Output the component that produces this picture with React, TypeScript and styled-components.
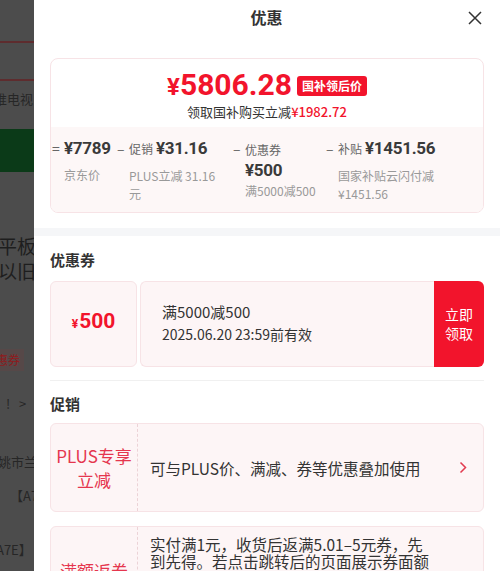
import React from 'react';
import styled, { createGlobalStyle } from 'styled-components';

const RED = '#f2142c';
const PINK_BG = '#fdf5f6';
const PINK_LINE = '#f7e3e6';

const GlobalStyle = createGlobalStyle`
  html, body {
    margin: 0;
    padding: 0;
    background: #ffffff;
  }
  body {
    font-family: "Noto Sans CJK SC", "Noto Sans", sans-serif;
    color: #333;
    overflow: hidden;
  }
  * {
    box-sizing: border-box;
  }
`;

function CloseIcon() {
  return (
    <svg width="16" height="16" viewBox="0 0 16 16">
      <path d="M2 2 L14 14 M14 2 L2 14" stroke="#333" strokeWidth="1.5" fill="none" />
    </svg>
  );
}

function Chevron() {
  return (
    <svg width="8" height="13" viewBox="0 0 8 13">
      <polyline points="1.5,1.5 6.5,6.5 1.5,11.5" stroke="#e23a4f" strokeWidth="1.5" fill="none" />
    </svg>
  );
}

function App() {
  return (
    <Page>
      <GlobalStyle />
      <Backdrop>
        <BgRule $top={41} />
        <BgRule $top={36} />
        <BgText $top={9} $left={-6}>
          推电视
        </BgText>
        <BgBanner />
        <BgTitle $top={62}>平板洞</BgTitle>
        <BgTitle $top={1}>以旧换</BgTitle>
        <BgTag>惠券</BgTag>
        <BgText $top={24} $left={6}>
          !&nbsp;&nbsp;&nbsp;&gt;
        </BgText>
        <BgText $top={40} $left={-2}>
          姚市兰
        </BgText>
        <BgText $top={16} $left={10}>
          【A7
        </BgText>
        <BgText $top={36} $left={-4}>
          A7E】
        </BgText>
      </Backdrop>

      <Sheet>
        <Header>
          <span />
          <Title>优惠</Title>
          <CloseButton>
            <CloseIcon />
          </CloseButton>
        </Header>

        <TopSection>
          <PriceCard>
            <PriceTop>
              <PriceLine>
                <BigPrice>
                  <small>¥</small>5806.28
                </BigPrice>
                <PriceTag>国补领后价</PriceTag>
              </PriceLine>
              <PriceNote>
                领取国补购买立减<em>¥1982.72</em>
              </PriceNote>
            </PriceTop>
            <Breakdown>
              <BreakItem>
                <Sign>=</Sign>
                <div>
                  <MainLine>
                    <Amount>¥7789</Amount>
                  </MainLine>
                  <SubText>京东价</SubText>
                </div>
              </BreakItem>
              <BreakItem>
                <Sign>–</Sign>
                <div>
                  <MainLine>
                    <Label>促销</Label>
                    <Amount>¥31.16</Amount>
                  </MainLine>
                  <SubText $width={92}>PLUS立减 31.16 元</SubText>
                </div>
              </BreakItem>
              <BreakItem>
                <Sign>–</Sign>
                <div>
                  <MainLine $stacked>
                    <Label>优惠券</Label>
                    <Amount>¥500</Amount>
                  </MainLine>
                  <SubText $tight>满5000减500</SubText>
                </div>
              </BreakItem>
              <BreakItem>
                <Sign>–</Sign>
                <div>
                  <MainLine>
                    <Label>补贴</Label>
                    <Amount>¥1451.56</Amount>
                  </MainLine>
                  <SubText $width={100}>国家补贴云闪付减 ¥1451.56</SubText>
                </div>
              </BreakItem>
            </Breakdown>
          </PriceCard>
        </TopSection>

        <Band />

        <Section>
          <SectionTitle>优惠券</SectionTitle>
          <Coupon>
            <CouponValue>
              <small>¥</small>500
            </CouponValue>
            <CouponInfo>
              <CouponRule>满5000减500</CouponRule>
              <CouponDate>2025.06.20 23:59前有效</CouponDate>
            </CouponInfo>
            <ClaimButton>
              立即
              <br />
              领取
            </ClaimButton>
          </Coupon>

          <Divider />

          <SectionTitle>促销</SectionTitle>
          <PromoList>
            <PromoCard>
              <PromoType>
                PLUS专享
                <br />
                立减
              </PromoType>
              <PromoBody>
                <PromoText>可与PLUS价、满减、券等优惠叠加使用</PromoText>
                <Chevron />
              </PromoBody>
            </PromoCard>
            <PromoCard>
              <PromoType>满额返券</PromoType>
              <PromoBody>
                <PromoText $multi>
                  实付满1元，收货后返满5.01–5元券，先到先得。若点击跳转后的页面展示券面额与此处不一致，以实际领取的券面额为准
                </PromoText>
              </PromoBody>
            </PromoCard>
          </PromoList>
        </Section>
      </Sheet>
    </Page>
  );
}

const Page = styled.div`
  display: flex;
  width: 500px;
  height: 571px;
  overflow: hidden;
`;

/* the dimmed product page peeking out behind the sheet */
const Backdrop = styled.div`
  width: 34px;
  flex-shrink: 0;
  background: #4c4c4c;
  display: flex;
  flex-direction: column;
  overflow: hidden;
  color: #222;
  > * {
    flex-shrink: 0;
  }
`;

const BgRule = styled.div<{ $top: number }>`
  margin-top: ${(p) => p.$top}px;
  height: 2px;
  background: #5e2c2e;
`;

const BgText = styled.div<{ $top: number; $left: number }>`
  margin-top: ${(p) => p.$top}px;
  margin-left: ${(p) => p.$left}px;
  font-size: 13px;
  line-height: 18px;
  white-space: nowrap;
  color: #262626;
`;

const BgBanner = styled.div`
  margin-top: 21px;
  height: 43px;
  background: #0b3a18;
`;

const BgTitle = styled.div<{ $top: number }>`
  margin-top: ${(p) => p.$top}px;
  font-size: 19px;
  line-height: 24px;
  white-space: nowrap;
  color: #1e1e1e;
  margin-left: -2px;
`;

const BgTag = styled.div`
  margin-top: 66px;
  width: 24px;
  height: 22px;
  line-height: 22px;
  background: #564848;
  color: #8e1a1d;
  font-size: 12px;
  white-space: nowrap;
  overflow: hidden;
  text-indent: -4px;
`;

const Sheet = styled.div`
  flex: 1;
  background: #fff;
  overflow: hidden;
`;

const Header = styled.div`
  height: 36px;
  display: grid;
  grid-template-columns: 1fr auto 1fr;
  align-items: center;
  padding: 0 17px 2px 16px;
`;

const Title = styled.div`
  font-size: 16px;
  font-weight: 700;
  color: #333;
`;

const CloseButton = styled.div`
  justify-self: end;
  display: flex;
  padding-top: 1px;
`;

const TopSection = styled.div`
  padding: 22px 16px 15px;
`;

const PriceCard = styled.div`
  border: 1px solid ${PINK_LINE};
  border-radius: 8px;
  overflow: hidden;
`;

const PriceTop = styled.div`
  display: flex;
  flex-direction: column;
  align-items: center;
  padding: 10px 0 6px;
`;

const PriceLine = styled.div`
  display: flex;
  align-items: center;
  height: 34px;
`;

const BigPrice = styled.div`
  font-family: Roboto, "Liberation Sans", sans-serif;
  font-weight: 700;
  font-size: 30px;
  line-height: 34px;
  color: ${RED};
  small {
    font-size: 24px;
  }
`;

const PriceTag = styled.div`
  margin-left: 5px;
  height: 20px;
  padding: 0 5px;
  border-radius: 3px;
  background: ${RED};
  color: #fff;
  font-size: 12px;
  font-weight: 700;
  line-height: 20px;
`;

const PriceNote = styled.div`
  font-size: 13px;
  line-height: 18px;
  color: #333;
  em {
    font-style: normal;
    font-weight: 500;
    color: ${RED};
  }
`;

const Breakdown = styled.div`
  display: grid;
  grid-template-columns: 65px 116px 93px 1fr;
  height: 85px;
  padding: 9px 0 0 1px;
  background: #fdf7f7;
`;

const BreakItem = styled.div`
  display: flex;
  align-items: flex-start;
`;

const Sign = styled.div`
  width: 12px;
  flex-shrink: 0;
  font-size: 14px;
  line-height: 24px;
  color: #666;
`;

const MainLine = styled.div<{ $stacked?: boolean }>`
  display: flex;
  flex-direction: ${(p) => (p.$stacked ? 'column' : 'row')};
  align-items: ${(p) => (p.$stacked ? 'flex-start' : 'baseline')};
  gap: ${(p) => (p.$stacked ? '0' : '3px')};
  line-height: ${(p) => (p.$stacked ? '20px' : '24px')};
  padding-top: ${(p) => (p.$stacked ? '4px' : '0')};
  white-space: nowrap;
`;

const Label = styled.span`
  font-size: 12px;
  color: #666;
`;

const Amount = styled.span`
  font-family: Roboto, "Liberation Sans", sans-serif;
  font-weight: 700;
  font-size: 17px;
  letter-spacing: -0.3px;
  color: #3a3a3a;
`;

const SubText = styled.div<{ $width?: number; $tight?: boolean }>`
  margin-top: ${(p) => (p.$tight ? '2px' : '6px')};
  max-width: ${(p) => (p.$width ? `${p.$width}px` : 'none')};
  font-size: 12px;
  line-height: 18px;
  color: #999;
  white-space: ${(p) => (p.$width ? 'normal' : 'nowrap')};
`;

const Band = styled.div`
  height: 8px;
  background: #f5f6f8;
`;

const Section = styled.div`
  padding: 14px 16px 0;
`;

const SectionTitle = styled.div`
  font-size: 15px;
  font-weight: 700;
  line-height: 20px;
  color: #333;
  margin-bottom: 11px;
`;

const Coupon = styled.div`
  display: flex;
  height: 86px;
  gap: 3px;
`;

const CouponValue = styled.div`
  width: 87px;
  flex-shrink: 0;
  display: flex;
  align-items: baseline;
  justify-content: center;
  padding-top: 26px;
  background: ${PINK_BG};
  border: 1px solid ${PINK_LINE};
  border-radius: 6px;
  color: ${RED};
  font-family: Roboto, "Liberation Sans", sans-serif;
  font-weight: 700;
  font-size: 21px;
  line-height: 26px;
  small {
    font-size: 12px;
    margin-right: 1px;
  }
`;

const CouponInfo = styled.div`
  flex: 1;
  display: flex;
  flex-direction: column;
  justify-content: center;
  padding: 0 0 2px 21px;
  background: ${PINK_BG};
  border: 1px solid ${PINK_LINE};
  border-right: none;
  border-radius: 6px 0 0 6px;
  margin-right: -3px;
`;

const CouponRule = styled.div`
  font-size: 15px;
  line-height: 22px;
  color: #333;
`;

const CouponDate = styled.div`
  font-size: 14px;
  line-height: 22px;
  color: #333;
`;

const ClaimButton = styled.div`
  width: 50px;
  flex-shrink: 0;
  display: flex;
  align-items: center;
  justify-content: center;
  text-align: center;
  background: ${RED};
  border-radius: 0 6px 6px 0;
  color: #fff;
  font-size: 14px;
  line-height: 19px;
`;

const Divider = styled.div`
  height: 1px;
  background: #f0f0f0;
  margin: 13px 0 13px;
`;

const PromoList = styled.div`
  display: flex;
  flex-direction: column;
  gap: 14px;
  margin-top: -2px;
`;

const PromoCard = styled.div`
  display: flex;
  min-height: 89px;
  background: ${PINK_BG};
  border: 1px solid ${PINK_LINE};
  border-radius: 6px;
`;

const PromoType = styled.div`
  width: 87px;
  flex-shrink: 0;
  display: flex;
  align-items: center;
  justify-content: center;
  text-align: center;
  border-right: 1px dashed #ecd3d7;
  color: #e5364e;
  font-size: 17px;
  line-height: 24px;
`;

const PromoBody = styled.div`
  flex: 1;
  display: flex;
  align-items: center;
  justify-content: space-between;
  padding: 0 16px 0 12px;
`;

const PromoText = styled.div<{ $multi?: boolean }>`
  font-size: 15.5px;
  line-height: ${(p) => (p.$multi ? '17px' : '22px')};
  color: #333;
  padding: ${(p) => (p.$multi ? '9px 30px 10px 0' : '0')};
  align-self: ${(p) => (p.$multi ? 'flex-start' : 'center')};
`;

export default App;
